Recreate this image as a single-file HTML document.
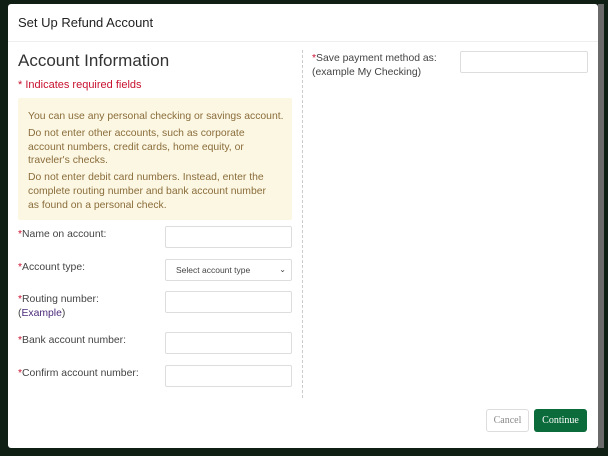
<!DOCTYPE html><html><head><style>
body{margin:0;width:608px;height:456px;background:#0f1f14;position:relative;overflow:hidden;font-family:"Liberation Sans",sans-serif;color:#333}
.m{position:absolute;left:8px;top:4px;width:590px;height:444px;background:#fff;border-radius:3px}
.sb{position:absolute;left:598px;top:4px;width:6px;height:444px;background:#6a6a6a}
.a{position:absolute}
.h{left:18px;top:15px;font-size:13px;color:#222}
.hl{left:8px;top:41px;width:590px;height:1px;background:#eee}
.t{left:18px;top:51px;font-size:17px;color:#333}
.r{left:18px;top:79px;font-size:11px;color:#c8102e}
.y{left:18px;top:98px;width:274px;height:122px;background:#fcf7e3;border-radius:2px;font-size:10.4px;color:#8a6d3b;line-height:13.8px;white-space:nowrap}
.y p{margin:0 0 3px 10px}
.l{left:18px;font-size:10.4px;color:#444;line-height:14px}
.l b{color:#c8102e;font-weight:normal}
.i{left:165px;width:125px;height:20px;border:1px solid #ddd;border-radius:2px}
.d{left:302px;top:50px;height:348px;border-left:1px dashed #ccc}
.btn{top:409px;height:21px;border-radius:3px;font-family:"Liberation Serif",serif;font-size:10px;line-height:21px;text-align:center}
</style></head><body>
<div class="m"></div><div class="sb"></div>
<div class="a h">Set Up Refund Account</div>
<div class="a hl"></div>
<div class="a t">Account Information</div>
<div class="a r">* Indicates required fields</div>
<div class="a y"><p style="margin-top:12px">You can use any personal checking or savings account.</p><p>Do not enter other accounts, such as corporate<br>account numbers, credit cards, home equity, or<br>traveler's checks.</p><p>Do not enter debit card numbers. Instead, enter the<br>complete routing number and bank account number<br>as found on a personal check.</p></div>
<div class="a l" style="top:228px"><b>*</b>Name on account:</div>
<div class="a i" style="top:226px"></div>
<div class="a l" style="top:261px"><b>*</b>Account type:</div>
<div class="a i" style="top:259px;font-size:8.5px;line-height:20px;color:#444"><span style="margin-left:10px">Select account type</span><span style="position:absolute;right:5px;font-size:8px">&#8964;</span></div>
<div class="a l" style="top:293px"><b>*</b>Routing number:<br>(<span style="color:#4b2a7a">Example</span>)</div>
<div class="a i" style="top:291px"></div>
<div class="a l" style="top:334px"><b>*</b>Bank account number:</div>
<div class="a i" style="top:332px"></div>
<div class="a l" style="top:367px"><b>*</b>Confirm account number:</div>
<div class="a i" style="top:365px"></div>
<div class="a d"></div>
<div class="a l" style="left:312px;top:52px"><b>*</b>Save payment method as:<br>(example My Checking)</div>
<div class="a i" style="left:460px;top:51px;width:126px"></div>
<div class="a btn" style="left:486px;width:41px;border:1px solid #ddd;color:#888">Cancel</div>
<div class="a btn" style="left:534px;width:53px;height:23px;line-height:23px;background:#0b6b3a;color:#fff">Continue</div>
</body></html>
